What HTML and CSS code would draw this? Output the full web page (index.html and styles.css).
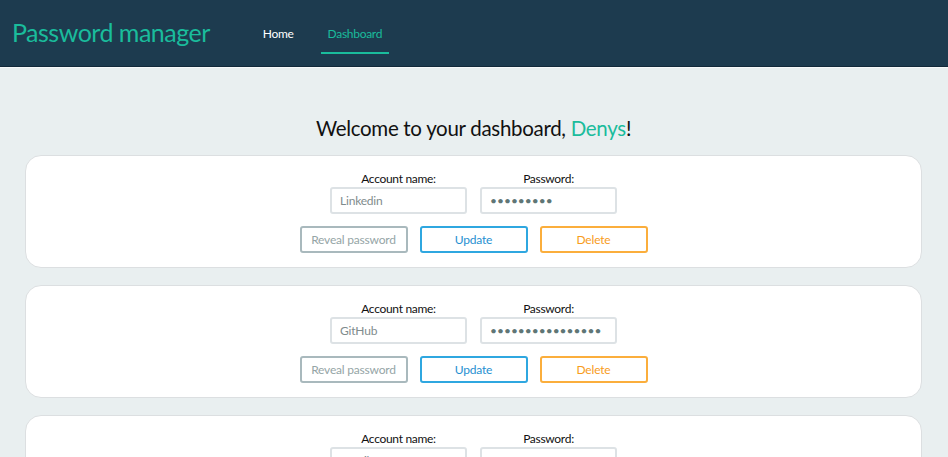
FILE: index.html
```html
<!DOCTYPE html>
<html>
<head>
<meta charset="utf-8">
<link rel="stylesheet" href="styles.css">
</head>
<body>
<header class="topbar">
  <div class="brand">Password manager</div>
  <nav class="nav">
    <a class="nav-link">Home</a>
    <a class="nav-link active">Dashboard</a>
  </nav>
</header>
<main class="main">
  <h1 class="welcome">Welcome to your dashboard, <span class="name">Denys</span>!</h1>
  <div class="card">
    <div class="fields">
      <div class="field"><label>Account name:</label><input class="input" value="Linkedin"></div>
      <div class="field"><label>Password:</label><input class="input" type="password" value="123456789"></div>
    </div>
    <div class="actions">
      <button class="btn reveal">Reveal password</button>
      <button class="btn update">Update</button>
      <button class="btn delete">Delete</button>
    </div>
  </div>
  <div class="card">
    <div class="fields">
      <div class="field"><label>Account name:</label><input class="input" value="GitHub"></div>
      <div class="field"><label>Password:</label><input class="input" type="password" value="1234567890123456"></div>
    </div>
    <div class="actions">
      <button class="btn reveal">Reveal password</button>
      <button class="btn update">Update</button>
      <button class="btn delete">Delete</button>
    </div>
  </div>
  <div class="card">
    <div class="fields">
      <div class="field"><label>Account name:</label><input class="input" value="Gmail"></div>
      <div class="field"><label>Password:</label><input class="input" type="password" value="12345678"></div>
    </div>
    <div class="actions">
      <button class="btn reveal">Reveal password</button>
      <button class="btn update">Update</button>
      <button class="btn delete">Delete</button>
    </div>
  </div>
</main>
</body>
</html>
```
FILE: styles.css
```css
* { box-sizing: border-box; }
html, body { margin: 0; padding: 0; }
body {
  font-family: Lato, "Open Sans", sans-serif;
  background: #e9eff0;
  color: #111;
  overflow: hidden;
  letter-spacing: -0.3px;
}
.topbar {
  height: 67px;
  background: #1d3b4f;
  border-bottom: 1px solid #12293a;
  display: flex;
  align-items: flex-start;
  box-shadow: 0 1px 0 #f6f9f9;
}
.brand {
  color: #1abc9c;
  font-size: 25px;
  letter-spacing: -0.5px;
  margin: 17px 0 0 12px;
}
.nav {
  display: flex;
  margin-left: 46px;
  gap: 20px;
}
.nav-link {
  color: #fff;
  font-size: 12px;
  padding: 26px 7px 11px;
  border-bottom: 2px solid transparent;
}
.nav-link.active {
  color: #1abc9c;
  border-bottom-color: #1abc9c;
}
.main {
  padding: 48px 26px 0 25px;
  display: flex;
  flex-direction: column;
  gap: 17px;
}
.welcome {
  margin: 0 0 -3px;
  text-align: center;
  font-weight: 400;
  font-size: 20.5px;
  line-height: 26px;
}
.name { color: #1abc9c; }
.card {
  background: #fff;
  border: 1px solid #dcdfe1;
  border-radius: 16px;
  height: 113px;
  flex: none;
  display: flex;
  flex-direction: column;
  align-items: center;
  padding-top: 15px;
}
.fields {
  display: flex;
  gap: 13px;
}
.field {
  display: flex;
  flex-direction: column;
  align-items: center;
}
.field label {
  font-size: 12px;
  line-height: 15px;
  color: #111;
  margin-bottom: 1px;
}
.input {
  width: 137px;
  height: 27px;
  border: 2px solid #dde2e5;
  border-radius: 3px;
  padding: 0 8px;
  font-family: Lato, sans-serif;
  font-size: 12px;
  letter-spacing: -0.2px;
  color: #7f8c8d;
  outline: none;
}
.input[type=password] { color: #5f7676; letter-spacing: 0; }
.actions {
  display: flex;
  gap: 12px;
  margin-top: 12px;
}
.btn {
  width: 108px;
  height: 27px;
  background: #fff;
  border-radius: 3px;
  border: 2px solid;
  font-family: Lato, sans-serif;
  font-size: 12px;
  letter-spacing: -0.2px;
  padding: 0;
}
.reveal { border-color: #a9b9bd; color: #95a5a6; }
.update { border-color: #2fa7e0; color: #1f8fd1; }
.delete { border-color: #fbae3c; color: #f89c1c; }
```
